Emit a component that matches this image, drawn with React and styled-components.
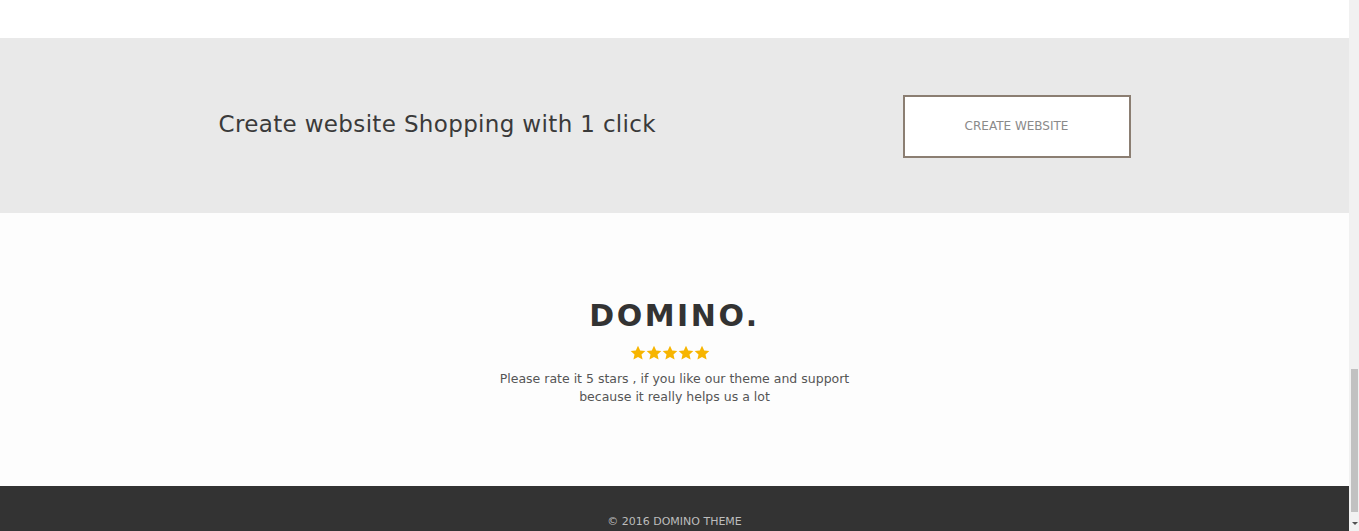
import React from "react";
import styled, { createGlobalStyle } from "styled-components";

const GlobalStyle = createGlobalStyle`
  html, body {
    margin: 0;
    padding: 0;
    background: #fff;
    overflow: hidden;
  }
  body {
    font-family: "DejaVu Sans", "Liberation Sans", sans-serif;
    color: #333;
  }
`;

const Page = styled.div`
  padding-right: 10px;
  display: flex;
  flex-direction: column;
`;

const TopGap = styled.div`
  height: 38px;
  background: #fff;
`;

const CtaBand = styled.section`
  height: 175px;
  background: #e9e9e9;
  display: flex;
  justify-content: center;
  align-items: center;
`;

const CtaInner = styled.div`
  width: 912px;
  display: flex;
  justify-content: space-between;
  align-items: center;
  padding-top: 1px;
`;

const CtaTitle = styled.h3`
  margin: 0 0 4px;
  font-size: 23px;
  font-weight: 400;
  color: #3a3a3a;
  letter-spacing: 0.35px;
`;

const OutlineButton = styled.a`
  box-sizing: border-box;
  width: 228px;
  height: 63px;
  display: flex;
  align-items: center;
  justify-content: center;
  border: 2px solid #8b7e72;
  background: #fff;
  color: #8a8a8a;
  font-size: 12px;
  text-transform: uppercase;
  text-decoration: none;
  cursor: pointer;
`;

const Brand = styled.section`
  height: 273px;
  background: #fdfdfd;
  display: flex;
  flex-direction: column;
  align-items: center;
  padding-top: 86px;
  box-sizing: border-box;
`;

const Logo = styled.h2`
  margin: 0;
  font-size: 30px;
  line-height: 34px;
  font-weight: 700;
  letter-spacing: 2.5px;
  color: #333;
`;

const Stars = styled.div`
  display: flex;
  gap: 0;
  margin-top: 12px;
  margin-right: 10px;
`;

const StarIcon = styled.svg`
  width: 16px;
  height: 16px;
  fill: #f7b500;
`;

const Note = styled.p`
  margin: 9px 0 0;
  width: 360px;
  text-align: center;
  font-size: 12.5px;
  line-height: 18px;
  color: #555;
`;

const Footer = styled.footer`
  height: 45px;
  background: #333;
  display: flex;
  justify-content: center;
  align-items: flex-end;
  padding-bottom: 2px;
  box-sizing: border-box;
`;

const Copy = styled.span`
  font-size: 11px;
  color: #bdbdbd;
  line-height: 14px;
`;

const ScrollTrack = styled.div`
  position: fixed;
  top: 0;
  right: 0;
  width: 10px;
  height: 100vh;
  background: #f1f1f1;
`;

const ScrollThumb = styled.div`
  position: absolute;
  left: 2px;
  right: 1px;
  top: 369px;
  height: 143px;
  background: #c1c1c1;
`;

const ScrollArrow = styled.div`
  position: absolute;
  left: 3px;
  bottom: 6px;
  width: 0;
  height: 0;
  border-left: 3px solid transparent;
  border-right: 3px solid transparent;
  border-top: 3px solid #505050;
`;

const Star = () => (
  <StarIcon viewBox="0 0 24 24">
    <path d="M12 1l3.3 7.1 7.7.8-5.8 5.2 1.7 7.7L12 17.9l-6.9 3.9 1.7-7.7L1 8.9l7.7-.8z" />
  </StarIcon>
);

export default function App() {
  return (
    <>
      <GlobalStyle />
      <Page>
        <TopGap />
        <CtaBand>
          <CtaInner>
            <CtaTitle>Create website Shopping with 1 click</CtaTitle>
            <OutlineButton>Create website</OutlineButton>
          </CtaInner>
        </CtaBand>
        <Brand>
          <Logo>DOMINO.</Logo>
          <Stars>
            {[0, 1, 2, 3, 4].map((i) => (
              <Star key={i} />
            ))}
          </Stars>
          <Note>
            Please rate it 5 stars , if you like our theme and support because it really helps us a lot
          </Note>
        </Brand>
        <Footer>
          <Copy>© 2016 DOMINO THEME</Copy>
        </Footer>
      </Page>
      <ScrollTrack>
        <ScrollThumb />
        <ScrollArrow />
      </ScrollTrack>
    </>
  );
}
